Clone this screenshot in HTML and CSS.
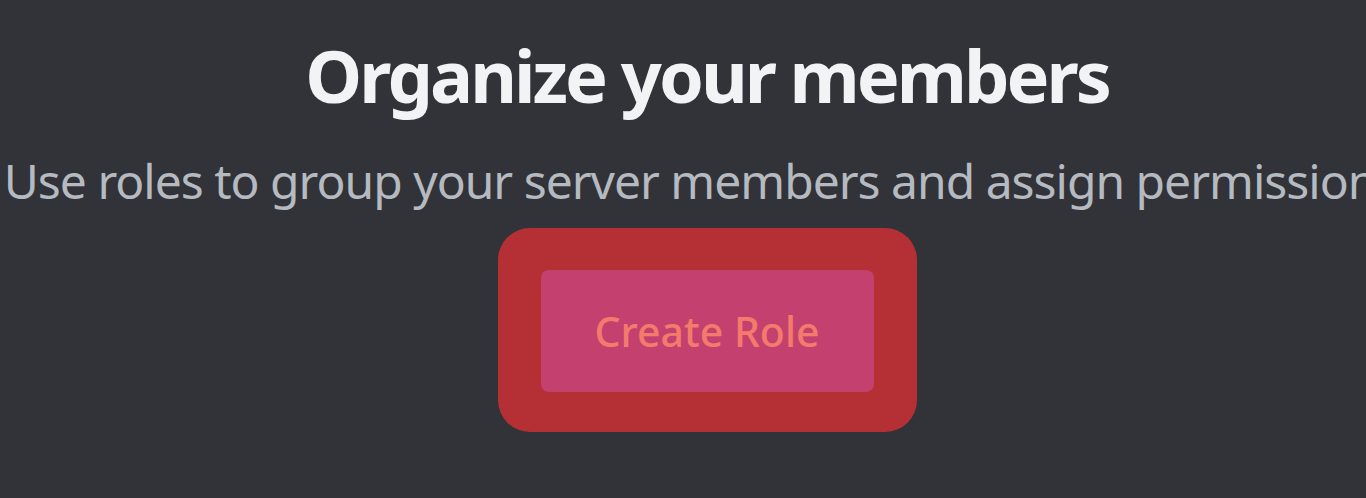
FILE: index.html
```html
<!DOCTYPE html>
<html>
<head>
<meta charset="utf-8">
<link rel="stylesheet" href="styles.css">
</head>
<body>
<div class="empty">
  <h1 class="title">Organize your members</h1>
  <p class="subtitle">Use roles to group your server members and assign permissions.</p>
  <div class="highlight">
    <button class="create-btn">Create Role</button>
  </div>
</div>
</body>
</html>
```
FILE: styles.css
```css
html, body {
  margin: 0;
  padding: 0;
  width: 1366px;
  height: 498px;
  overflow: hidden;
  background: #313338;
}
.empty {
  width: 1414px;
  display: flex;
  flex-direction: column;
  align-items: center;
  padding-top: 31px;
  font-family: "Noto Sans", "Open Sans", sans-serif;
}
.title {
  margin: 0;
  font-size: 72px;
  line-height: 88px;
  font-weight: 700;
  letter-spacing: -3px;
  color: #f2f3f5;
  white-space: nowrap;
}
.subtitle {
  margin: 34px 0 0;
  font-size: 48px;
  line-height: 56px;
  letter-spacing: -1px;
  color: #b5bac1;
  white-space: nowrap;
}
.highlight {
  margin-top: 19px;
  padding: 42px 43px 40px;
  background: #b53034;
  border-radius: 32px;
}
.create-btn {
  display: block;
  width: 333px;
  height: 122px;
  border: 0;
  border-radius: 8px;
  background: #c4416f;
  color: #f47a6c;
  font-family: "Noto Sans", "Open Sans", sans-serif;
  font-size: 41px;
  font-weight: 500;
  padding: 0;
}
```
